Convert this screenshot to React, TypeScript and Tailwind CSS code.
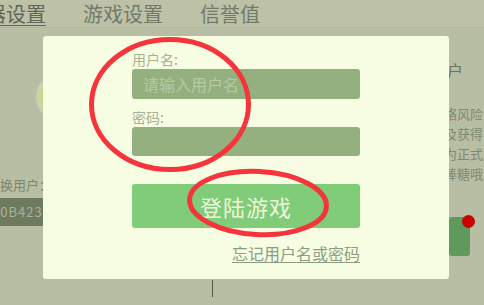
import React from 'react';

const cjk = "font-['Noto_Sans_CJK_SC','Noto_Sans',sans-serif]";

const App: React.FC = () => {
  return (
    <div className={`relative w-[484px] h-[305px] overflow-hidden bg-[#b8bea3] ${cjk}`}>
      {/* tab bar */}
      <header className="h-[28px] bg-[#bcc1a8] border-b border-[#b1b79d] flex items-center gap-[37px] text-[20px] leading-[27px] text-[#727b67] whitespace-nowrap">
        <span className="-ml-[54px] text-[#5e6753] underline underline-offset-[3px] decoration-1">服务器设置</span>
        <span>游戏设置</span>
        <span>信誉值</span>
      </header>

      {/* page behind the dialog */}
      <div className="flex h-[277px]">
        <div className="w-[431px] shrink-0 flex flex-col">
          <div className="ml-[36px] mt-[45px] w-[48px] h-[48px] rounded-full border-2 border-[#c9ccc0] bg-[#c6d98f]" />
          <div className="mt-[56px] -ml-[13px] text-[13px] leading-[16px] text-[#7d8672] whitespace-nowrap">切换用户：</div>
          <div className="mt-[5px] w-[120px] h-[28px] bg-[#6e7a5e] text-[13px] leading-[28px] tracking-[1px] text-[#a9b29c] -ml-[8px] whitespace-nowrap">00B4235</div>
          <div className="mt-auto ml-[212px] w-px h-[17px] mb-[8px] bg-[#4e5944]" />
        </div>
        <div className="flex flex-col whitespace-nowrap text-[#7f8873]">
          <div className="mt-[33px] text-[16px] leading-[18px] text-[#6a7360]">账户</div>
          <div className="mt-[25px] text-[13px] leading-[20px]">
            <div>网络风险</div>
            <div>以及获得</div>
            <div>成为正式</div>
            <div>棒棒糖哦</div>
          </div>
          <div className="mt-[33px] ml-[18px] w-[21px] h-[39px] rounded-[3px] bg-[#5f995b]" />
        </div>
      </div>
      <div className="absolute left-[462px] top-[215px] w-[13px] h-[13px] rounded-full bg-[#cc0202]" />

      {/* login dialog */}
      <div className="absolute left-[43px] top-[36px] w-[406px] h-[243px] rounded-[3px] bg-[#f6fde2] pl-[89px] pt-[14px]">
        <div className="w-[228px] flex flex-col">
          <label className="text-[14px] leading-[18px] text-[#a7b19a]">用户名:</label>
          <div className="mt-[1px] h-[30px] rounded-[3px] bg-[#95b07f] pl-[11px] text-[16px] leading-[30px] text-[#b5c9a3]">请输入用户名</div>
          <label className="mt-[9px] text-[14px] leading-[18px] text-[#a7b19a]">密码:</label>
          <div className="mt-[1px] h-[29px] rounded-[3px] bg-[#95b07f]" />
          <button className="mt-[28px] h-[44px] rounded-[3px] bg-[#80cc78] text-[22px] tracking-[1px] text-[#edf6dc]">登陆游戏</button>
          <a className="mt-[16px] self-end text-[16px] leading-[18px] text-[#8d9c84] underline underline-offset-[2px] decoration-1">忘记用户名或密码</a>
        </div>
      </div>

      {/* red annotation rings */}
      <svg className="absolute inset-0 pointer-events-none" width="484" height="305">
        <ellipse cx="170" cy="104.5" rx="78.5" ry="65" fill="none" stroke="#f5343b" strokeWidth="5" />
        <ellipse cx="258" cy="203" rx="68.5" ry="31.5" fill="none" stroke="#f5343b" strokeWidth="5" transform="rotate(3 258 203)" />
      </svg>
    </div>
  );
};

export default App;
